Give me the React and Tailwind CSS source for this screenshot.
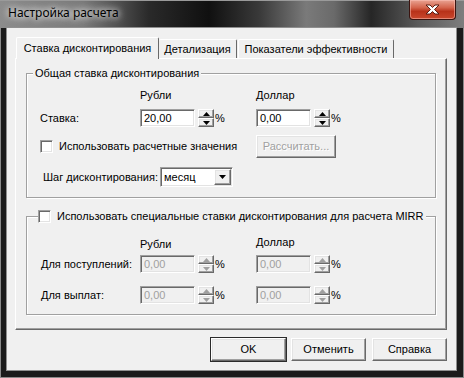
import React from 'react'

const raised =
  'border border-t-white border-l-white border-r-[#696969] border-b-[#696969] shadow-[inset_-1px_-1px_0_#a0a0a0,inset_1px_1px_0_#e3e3e3]'
const sunken =
  'border border-t-[#a0a0a0] border-l-[#a0a0a0] border-r-white border-b-white shadow-[inset_1px_1px_0_#696969,inset_-1px_-1px_0_#e3e3e3]'
const etched = 'border border-[#a0a0a0] shadow-[inset_1px_1px_0_#fff,1px_1px_0_#fff]'

function Arrow({ up, disabled }) {
  const color = disabled ? '#a0a0a0' : '#000'
  return (
    <svg width="7" height="4" viewBox="0 0 7 4">
      <path d={up ? 'M3.5 0 L7 4 L0 4 Z' : 'M0 0 L7 0 L3.5 4 Z'} fill={color} />
    </svg>
  )
}

function Spin({ value, disabled }) {
  return (
    <div className="flex items-center h-[18px]">
      <div
        className={`w-[55px] h-[18px] pl-[3px] text-[11px] leading-[16px] ${sunken} ${
          disabled ? 'bg-[#f0f0f0] text-[#a0a0a0]' : 'bg-white text-black'
        }`}
      >
        {value}
      </div>
      <div className="ml-[3px] w-[16px] h-[18px] flex flex-col">
        <div className={`h-[9px] flex items-center justify-center bg-[#f0f0f0] ${raised}`}>
          <Arrow up disabled={disabled} />
        </div>
        <div className={`h-[9px] flex items-center justify-center bg-[#f0f0f0] ${raised}`}>
          <Arrow disabled={disabled} />
        </div>
      </div>
      <span className="ml-[1px] text-[11px] leading-[14px]">%</span>
    </div>
  )
}

function Checkbox() {
  return <div className={`w-[13px] h-[13px] bg-white shrink-0 ${sunken}`} />
}

function Button({ children, isDefault, disabled, className = '' }) {
  return (
    <div
      className={`w-[75px] h-[23px] flex items-center justify-center bg-[#f0f0f0] text-[11px] ${raised} ${
        isDefault ? 'outline outline-1 outline-[#2b2b2b]' : ''
      } ${disabled ? 'text-[#a0a0a0] [text-shadow:1px_1px_0_#fff]' : 'text-black'} ${className}`}
    >
      {children}
    </div>
  )
}

export default function App() {
  return (
    <div className="w-[464px] h-[378px] flex flex-col bg-[#1b1b1b] font-['Liberation_Sans',Arial,sans-serif] text-[11px] text-black overflow-hidden">
      {/* заголовок окна */}
      <div className="h-[28px] flex items-start justify-between bg-[linear-gradient(90deg,#8c8c8c_0%,#7a7a7a_18%,#2a2a2a_32%,#101010_45%,#3a3a3a_56%,#7a7a7a_66%,#6a6a6a_72%,#262626_80%,#5a5a5a_90%,#7e7e7e_100%)] shadow-[inset_0_1px_0_#9a9a9a]">
        <div className="pl-[8px] pt-[5px] font-['Noto_Sans',sans-serif] text-[12px] leading-[16px] text-black [text-shadow:0_0_6px_#fff,0_0_10px_#fff]">
          Настройка расчета
        </div>
        <div className="mr-[8px] w-[47px] h-[20px] rounded-b-[4px] border border-t-0 border-[#3a1410] bg-[linear-gradient(180deg,#e9a393_0%,#d4644c_40%,#b8321a_60%,#c9472c_100%)] shadow-[inset_0_0_0_1px_rgba(255,200,190,0.5)] flex items-center justify-center">
          <svg width="15" height="11" viewBox="0 0 15 11">
            <path
              d="M1 1 L5 1 L7.5 3.5 L10 1 L14 1 L9.5 5.5 L14 10 L10 10 L7.5 7.5 L5 10 L1 10 L5.5 5.5 Z"
              fill="#fff"
              stroke="#5a1e14"
              strokeWidth="1"
            />
          </svg>
        </div>
      </div>

      <div className="flex">
        <div className="w-[7px] border-l border-[#8a8a8a]" />
        {/* клиентская область */}
        <div className="w-[449px] h-[342px] bg-[#f0f0f0] pt-[9px] shadow-[0_0_0_1px_#8f8f8f]">
          {/* вкладки */}
          <div className="ml-[9px] h-[21px] flex items-end relative z-10">
            <div className="w-[143px] h-[22px] mb-[-1px] flex items-center justify-center bg-[#f0f0f0] border-t border-l border-r border-t-white border-l-white border-r-[#696969] rounded-t-[2px]">
              Ставка дисконтирования
            </div>
            <div className="w-[78px] h-[19px] flex items-center justify-center border-t border-r border-t-white border-r-[#696969] rounded-t-[2px]">
              Детализация
            </div>
            <div className="ml-[1px] w-[156px] h-[19px] flex items-center justify-center border-t border-l border-r border-t-white border-l-white border-r-[#696969] rounded-t-[2px]">
              Показатели эффективности
            </div>
          </div>

          {/* панель вкладки */}
          <div className="ml-[8px] w-[432px] h-[272px] border border-t-white border-l-white border-r-[#696969] border-b-[#696969] shadow-[inset_-1px_-1px_0_#a0a0a0]">
            {/* Общая ставка */}
            <div className={`relative ml-[10px] mt-[14px] w-[410px] h-[125px] ${etched}`}>
              <div className="absolute left-[6px] -top-[8px] px-[2px] bg-[#f0f0f0] leading-[14px]">
                Общая ставка дисконтирования
              </div>
              <div className="mt-[14px] h-[14px] flex leading-[14px]">
                <div className="w-[113px]" />
                <div className="w-[116px]">Рубли</div>
                <div>Доллар</div>
              </div>
              <div className="mt-[7px] h-[18px] flex items-center">
                <div className="w-[113px] pl-[13px]">Ставка:</div>
                <div className="w-[116px]">
                  <Spin value="20,00" />
                </div>
                <Spin value="0,00" />
              </div>
              <div className="mt-[8px] h-[23px] flex items-center">
                <div className="w-[229px] pl-[13px] flex items-center gap-[6px]">
                  <Checkbox />
                  <span>Использовать расчетные значения</span>
                </div>
                <Button disabled className="w-[80px]">
                  Рассчитать...
                </Button>
              </div>
              <div className="mt-[9px] h-[20px] flex items-center">
                <div className="w-[133px] pl-[16px] whitespace-nowrap">Шаг дисконтирования:</div>
                <div className={`w-[73px] h-[20px] flex items-center bg-white ${sunken}`}>
                  <span className="flex-1 pl-[3px]">месяц</span>
                  <div className={`w-[17px] h-[16px] mr-[1px] flex items-center justify-center bg-[#f0f0f0] ${raised}`}>
                    <Arrow />
                  </div>
                </div>
              </div>
            </div>

            {/* Специальные ставки MIRR */}
            <div className={`relative ml-[10px] mt-[18px] w-[410px] h-[99px] ${etched}`}>
              <div className="absolute left-[11px] -top-[8px] pr-[2px] bg-[#f0f0f0] flex items-center gap-[6px] leading-[14px]">
                <Checkbox />
                <span>Использовать специальные ставки дисконтирования для расчета MIRR</span>
              </div>
              <div className="mt-[20px] h-[14px] flex leading-[14px]">
                <div className="w-[113px]" />
                <div className="w-[116px]">Рубли</div>
                <div className="-mt-[2px]">Доллар</div>
              </div>
              <div className="mt-[4px] h-[18px] flex items-center">
                <div className="w-[113px] pl-[14px] whitespace-nowrap">Для поступлений:</div>
                <div className="w-[116px]">
                  <Spin value="0,00" disabled />
                </div>
                <Spin value="0,00" disabled />
              </div>
              <div className="mt-[13px] h-[18px] flex items-center">
                <div className="w-[113px] pl-[14px]">Для выплат:</div>
                <div className="w-[116px]">
                  <Spin value="0,00" disabled />
                </div>
                <Spin value="0,00" disabled />
              </div>
            </div>
          </div>

          {/* кнопки */}
          <div className="mt-[8px] flex justify-end pr-[9px]">
            <Button isDefault>OK</Button>
            <Button className="ml-[5px]">Отменить</Button>
            <Button className="ml-[6px]">Справка</Button>
          </div>
        </div>
        <div className="w-[8px] border-r border-[#8a8a8a]" />
      </div>
      <div className="flex-1 border-b border-x border-[#8a8a8a]" />
    </div>
  )
}
